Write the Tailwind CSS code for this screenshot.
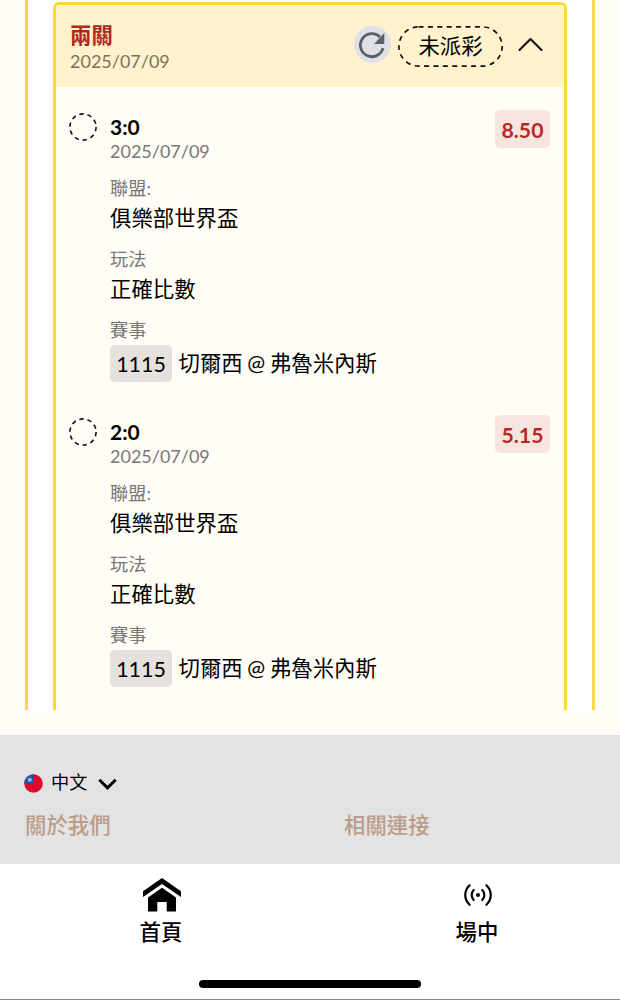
<!DOCTYPE html>
<html lang="zh-Hant">
<head>
  <meta charset="UTF-8" />
  <title>投注紀錄</title>
  <script src="https://cdn.jsdelivr.net/npm/@tailwindcss/browser@4"></script>
</head>
<body class="w-[620px] h-[1000px] overflow-hidden flex flex-col bg-[#fffdf5] text-black text-[21.4px] font-['Lato','Noto_Sans_CJK_TC',sans-serif]">

  <main class="h-[735px] shrink-0 px-[25px]">
    <div class="h-[710px] border-x-[3px] border-[#fbd745] bg-white px-[25px] pt-0.5">
      <section class="h-[708px] border-[3px] border-b-0 border-[#fbd745] rounded-t-md bg-[#fffdf5] overflow-hidden">

        <header class="flex h-[82px] bg-[#fff2cd] pl-3.5 pr-[21px]">
          <div class="flex-1 pt-[16px]">
            <h2 class="h-[28px] leading-[28px] font-bold text-[#b02a1c]">兩關</h2>
            <p class="h-[24px] leading-[25px] text-[18px] text-[#7b735c]">2025/07/09</p>
          </div>
          <div class="flex items-center h-[79px]">
            <button class="size-[37px] rounded-full bg-[#e0e1e6] mr-[7px] flex items-center justify-center">
              <svg class="size-[37px]" viewBox="0 0 37 37" fill="none">
                <path d="M29 22.2A11.5 11.5 0 1 1 26 11" stroke="#5c6065" stroke-width="2.8" />
                <path d="M30.3 7V18H20Z" fill="#5c6065" />
              </svg>
            </button>
            <div class="relative w-[105px] h-[41px] mt-[3px] flex items-center justify-center">
              <svg class="absolute inset-0" width="105" height="41" fill="none">
                <rect x="0.9" y="0.9" width="103.2" height="39.2" rx="19.6" stroke="#111" stroke-width="1.7" stroke-dasharray="5 4.4" />
              </svg>
              <span class="leading-[41px]">未派彩</span>
            </div>
            <svg class="ml-[15px]" width="25" height="16" viewBox="0 0 25 16" fill="none">
              <path d="M1.5 13 12.5 2 23.5 13" stroke="#111" stroke-width="2.1" stroke-linecap="round" stroke-linejoin="round" />
            </svg>
          </div>
        </header>

        <div id="bets"></div>
      </section>
    </div>
  </main>

  <footer class="h-[129px] shrink-0 bg-[#e3e3e3] px-[24px] pt-[34px]">
    <div class="flex items-center h-[28px]">
      <svg width="19" height="19" viewBox="0 0 19 19">
        <circle cx="9.5" cy="9.5" r="9.3" fill="#dc0a2d" />
        <path d="M9.5 0.2V9.5H0.2A9.3 9.3 0 0 1 9.5 0.2Z" fill="#1756ad" />
        <circle cx="5.8" cy="5.8" r="2.1" fill="#8db9ea" />
      </svg>
      <span class="ml-[8px] text-[18.2px]">中文</span>
      <svg class="ml-[11px] mt-0.5" width="19" height="12" viewBox="0 0 19 12" fill="none">
        <path d="M1.3 1.8 9.5 9.8 17.7 1.8" stroke="#000" stroke-width="3" />
      </svg>
    </div>
    <div class="flex h-[30px] pl-px mt-[13px] leading-[30px] font-medium text-[#bb9c89]">
      <p class="w-[319px]">關於我們</p>
      <p>相關連接</p>
    </div>
  </footer>

  <nav class="h-[136px] shrink-0 bg-white border-b border-[#858585] flex flex-col justify-between">
    <div class="flex pl-[3px] font-medium">
      <a class="w-[316px] shrink-0 flex flex-col items-center pt-[14px]">
        <svg class="ml-0.5" width="38" height="34" viewBox="0 0 38 34">
          <path d="M0 13.3 19 0 38 13.3V19L19 6 0 19Z" />
          <path d="M5 19.5 19 9.8 33 19.5V33.5H23.7V24H14.3V33.5H5Z" />
        </svg>
        <span class="mt-[5px] leading-[30px]">首頁</span>
      </a>
      <a class="w-[316px] shrink-0 flex flex-col items-center pt-[19px]">
        <svg class="ml-0.5" width="30" height="24" viewBox="0 0 30 24" fill="none" stroke="#000" stroke-width="2.2" stroke-linecap="round">
          <circle cx="15" cy="12" r="2" fill="#000" stroke="none" />
          <path d="M10.7 7C8 9.8 8 14.2 10.7 17M19.3 7C22 9.8 22 14.2 19.3 17" />
          <path d="M6.6 2.3C.8 7.8.8 16.2 6.6 21.7M23.4 2.3C29.2 7.8 29.2 16.2 23.4 21.7" />
        </svg>
        <span class="mt-[10px] leading-[30px]">場中</span>
      </a>
    </div>
    <div class="w-[222px] h-2 rounded-full bg-black mx-auto mb-[11px]"></div>
  </nav>

  <script>
    const bets = [
      { score: '3:0', odds: '8.50' },
      { score: '2:0', odds: '5.15' },
    ];

    document.getElementById('bets').innerHTML = bets.map((bet) => `
      <article class="flex items-start h-[305.4px] pt-[23px] pl-[13px] pr-3.5">
        <svg class="mt-[3px]" width="28" height="28" fill="none">
          <circle cx="14" cy="14" r="13.1" stroke="#111" stroke-width="1.6" stroke-dasharray="4.4 3.83" />
        </svg>
        <div class="flex-1 ml-[13px] pt-[5px]">
          <p class="h-[24px] leading-[24px] font-bold text-[21px]">${bet.score}</p>
          <p class="h-[24px] leading-[25px] text-[18px] text-[#777]">2025/07/09</p>
          <p class="h-[28px] leading-[28px] mt-[11px] text-[18.2px] text-[#777]">聯盟:</p>
          <p class="h-[32px] leading-[32px]">俱樂部世界盃</p>
          <p class="h-[28px] leading-[28px] mt-[11px] text-[18.2px] text-[#777]">玩法</p>
          <p class="h-[32px] leading-[32px]">正確比數</p>
          <p class="h-[28px] leading-[28px] mt-[11px] text-[18.2px] text-[#777]">賽事</p>
          <p class="flex items-center h-[37px] mt-px leading-[37px] [word-spacing:-0.8px]">
            <span class="w-[62px] h-[37px] rounded-[5px] bg-[#e5e1dc] text-center leading-[38px] mr-[6.5px]">1115</span>切爾西 @ 弗魯米內斯
          </p>
        </div>
        <span class="w-[55px] h-[38px] rounded-[5px] bg-[#f7e5df] text-center leading-[40px] font-bold text-[21.2px] text-[#b7282a]">${bet.odds}</span>
      </article>
    `).join('');
  </script>

</body>
</html>
